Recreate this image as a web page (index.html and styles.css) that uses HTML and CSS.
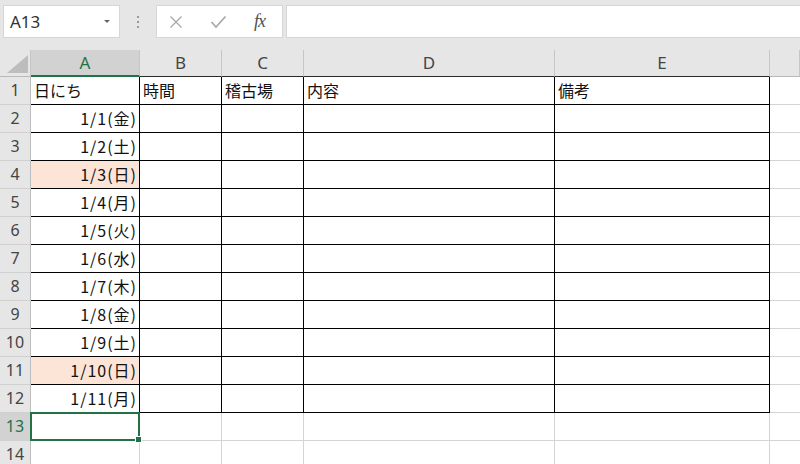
FILE: index.html
```html
<!DOCTYPE html>
<html lang="ja">
<head>
    <meta charset="UTF-8">
    <meta name="viewport" content="width=device-width, initial-scale=1.0">
    <title>稽古スケジュール</title>
    <link rel="stylesheet" href="styles.css">
</head>
<body>
    <div class="workbook">
        <!-- name box + formula bar -->
        <div class="formula-bar">
            <div class="name-box">
                <span>A13</span>
                <span class="caret"></span>
            </div>
            <div class="grip"><i></i><i></i><i></i></div>
            <div class="fx-buttons">
                <svg class="btn-cancel" width="14" height="14" viewBox="0 0 14 14">
                    <path d="M1.5 1.5 L12.5 12.5 M12.5 1.5 L1.5 12.5" stroke="#a9a9a9" stroke-width="1.3" fill="none"/>
                </svg>
                <svg class="btn-enter" width="17" height="14" viewBox="0 0 17 14">
                    <path d="M1.5 7 L6 12 L15.5 1.5" stroke="#a9a9a9" stroke-width="1.8" fill="none"/>
                </svg>
                <span class="fx">fx</span>
            </div>
            <div class="formula-input"></div>
        </div>

        <div class="sheet">
            <div class="row head">
                <div class="corner">
                    <svg width="31" height="27" viewBox="0 0 31 27">
                        <polygon points="7,23 28,5 28,23" fill="#bdbdbd"/>
                    </svg>
                </div>
                <div class="ch active">A</div>
                <div class="ch edge">B</div>
                <div class="ch edge">C</div>
                <div class="ch edge">D</div>
                <div class="ch edge">E</div>
                <div class="ch"></div>
            </div>

            <div class="row">
                <div class="rh">1</div>
                <div class="b">日にち</div>
                <div class="b">時間</div>
                <div class="b">稽古場</div>
                <div class="b">内容</div>
                <div class="b">備考</div>
                <div class="gap"></div>
            </div>
            <div class="row">
                <div class="rh">2</div>
                <div class="b num">1/1(金)</div>
                <div class="b"></div><div class="b"></div><div class="b"></div><div class="b"></div>
                <div class="gap"></div>
            </div>
            <div class="row">
                <div class="rh">3</div>
                <div class="b num">1/2(土)</div>
                <div class="b"></div><div class="b"></div><div class="b"></div><div class="b"></div>
                <div class="gap"></div>
            </div>
            <div class="row">
                <div class="rh">4</div>
                <div class="b num sunday">1/3(日)</div>
                <div class="b"></div><div class="b"></div><div class="b"></div><div class="b"></div>
                <div class="gap"></div>
            </div>
            <div class="row">
                <div class="rh">5</div>
                <div class="b num">1/4(月)</div>
                <div class="b"></div><div class="b"></div><div class="b"></div><div class="b"></div>
                <div class="gap"></div>
            </div>
            <div class="row">
                <div class="rh">6</div>
                <div class="b num">1/5(火)</div>
                <div class="b"></div><div class="b"></div><div class="b"></div><div class="b"></div>
                <div class="gap"></div>
            </div>
            <div class="row">
                <div class="rh">7</div>
                <div class="b num">1/6(水)</div>
                <div class="b"></div><div class="b"></div><div class="b"></div><div class="b"></div>
                <div class="gap"></div>
            </div>
            <div class="row">
                <div class="rh">8</div>
                <div class="b num">1/7(木)</div>
                <div class="b"></div><div class="b"></div><div class="b"></div><div class="b"></div>
                <div class="gap"></div>
            </div>
            <div class="row">
                <div class="rh">9</div>
                <div class="b num">1/8(金)</div>
                <div class="b"></div><div class="b"></div><div class="b"></div><div class="b"></div>
                <div class="gap"></div>
            </div>
            <div class="row">
                <div class="rh">10</div>
                <div class="b num">1/9(土)</div>
                <div class="b"></div><div class="b"></div><div class="b"></div><div class="b"></div>
                <div class="gap"></div>
            </div>
            <div class="row">
                <div class="rh">11</div>
                <div class="b num sunday">1/10(日)</div>
                <div class="b"></div><div class="b"></div><div class="b"></div><div class="b"></div>
                <div class="gap"></div>
            </div>
            <div class="row">
                <div class="rh">12</div>
                <div class="b num">1/11(月)</div>
                <div class="b"></div><div class="b"></div><div class="b"></div><div class="b"></div>
                <div class="gap"></div>
            </div>
            <div class="row">
                <div class="rh active">13</div>
                <div class="selected"></div>
                <div></div><div></div><div></div><div></div><div class="gap"></div>
            </div>
            <div class="row">
                <div class="rh">14</div>
                <div></div><div></div><div></div><div></div><div></div><div class="gap"></div>
            </div>
        </div>
    </div>
</body>
</html>
```

FILE: styles.css
```css
:root {
    --chrome: #e6e6e6;
    --chrome-dark: #d2d2d2;
    --grid: #d4d4d4;
    --excel-green: #217346;
    --cols: 31px 109px 82px 82px 251px 215px 1fr;
}

body {
    margin: 0;
    overflow: hidden;
    background: #fff;
    font-family: "Noto Sans", "Liberation Sans", sans-serif;
}

.workbook {
    width: 800px;
    height: 464px;
    overflow: hidden;
}

/* Formula bar */
.formula-bar {
    display: flex;
    align-items: flex-start;
    height: 50px;
    padding: 5px 0 0 3px;
    box-sizing: border-box;
    background: var(--chrome);
}

.name-box {
    display: flex;
    align-items: center;
    justify-content: space-between;
    width: 117px;
    height: 33px;
    padding: 0 9px 0 6px;
    box-sizing: border-box;
    background: #fff;
    border: 1px solid #d6d6d6;
    font-size: 17px;
    color: #333;
}

.caret {
    width: 0;
    height: 0;
    border-left: 3px solid transparent;
    border-right: 3px solid transparent;
    border-top: 3px solid #666;
}

.grip {
    display: flex;
    flex-direction: column;
    align-items: center;
    gap: 3px;
    width: 36px;
    padding-top: 11px;
}

.grip i {
    width: 2px;
    height: 2px;
    background: #9a9a9a;
}

.fx-buttons {
    display: flex;
    align-items: center;
    gap: 27px;
    width: 127px;
    height: 33px;
    padding-left: 12px;
    box-sizing: border-box;
    background: #fff;
    border: 1px solid #d6d6d6;
}

.fx {
    font-family: "Liberation Serif", serif;
    font-style: italic;
    font-size: 18px;
    color: #505050;
    letter-spacing: -1px;
}

.formula-input {
    flex: 1;
    height: 33px;
    margin-left: 3px;
    margin-right: -2px;
    background: #fff;
    border: 1px solid #d6d6d6;
    box-sizing: border-box;
}

/* Grid */
.row {
    display: grid;
    grid-template-columns: var(--cols);
    height: 28px;
}

.row > div {
    box-sizing: border-box;
    border-right: 1px solid var(--grid);
    border-bottom: 1px solid var(--grid);
    font-family: "Noto Sans CJK JP", "Noto Sans", sans-serif;
    font-size: 16px;
    line-height: 27px;
    color: #111;
    padding: 0 3px;
    white-space: nowrap;
    overflow: hidden;
}

.row > .gap {
    border-right: none;
}

.row.head {
    height: 27px;
    background: var(--chrome);
}

.row.head > div {
    font-family: "Noto Sans", "Liberation Sans", sans-serif;
    font-size: 17px;
    line-height: 26px;
    text-align: center;
    color: #444;
    border-right-color: #c6c6c6;
    border-bottom-color: #b8b8b8;
}

.row.head > .corner {
    padding: 0;
    line-height: 0;
}

.row.head > .edge {
    border-bottom-color: #2a2a2a;
}

.row.head > .active {
    background: var(--chrome-dark);
    color: var(--excel-green);
    border-bottom: 2px solid var(--excel-green);
}

.row > .rh {
    background: var(--chrome);
    font-family: "Noto Sans", "Liberation Sans", sans-serif;
    font-size: 16px;
    text-align: center;
    color: #444;
    border-right-color: #bdbdbd;
    border-bottom-color: #d0d0d0;
    padding: 0;
}

.row > .rh.active {
    background: var(--chrome-dark);
    color: var(--excel-green);
}

.row > .b {
    border-right-color: #000;
    border-bottom-color: #000;
}

.row > .num {
    text-align: right;
    letter-spacing: 1px;
    padding-right: 2px;
}

.row > .sunday {
    background: #fce4d6;
}

/* active cell */
.row > .selected {
    position: relative;
    overflow: visible;
}

.selected::after {
    content: "";
    position: absolute;
    left: -1px;
    top: -1px;
    right: -1px;
    bottom: -1px;
    border: 2px solid var(--excel-green);
}

.selected::before {
    content: "";
    position: absolute;
    right: -3px;
    bottom: -3px;
    width: 5px;
    height: 5px;
    background: var(--excel-green);
    border: 1px solid #fff;
    z-index: 1;
}
```
